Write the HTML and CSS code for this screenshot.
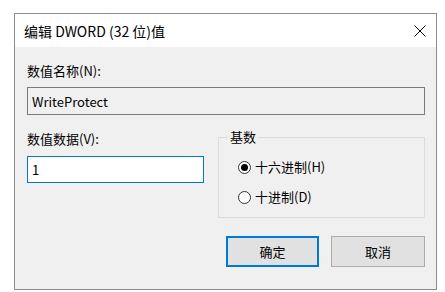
FILE: index.html
```html
<!DOCTYPE html>
<html lang="zh-CN">
<head>
    <meta charset="UTF-8">
    <meta name="viewport" content="width=device-width, initial-scale=1.0">
    <title>编辑 DWORD (32 位)值</title>
    <link rel="stylesheet" href="styles.css">
</head>
<body>

<div class="dialog">
    <div class="titlebar">
        <span class="title">编辑 DWORD (32 位)值</span>
        <button class="close" type="button" aria-label="关闭">
            <svg width="12" height="12" viewBox="0 0 12 12">
                <path d="M0.5 0.5 L11.5 11.5 M11.5 0.5 L0.5 11.5" stroke="#000" stroke-width="1" fill="none"/>
            </svg>
        </button>
    </div>

    <form class="body">
        <label class="field-label" for="value-name">数值名称(N):</label>
        <input type="text" id="value-name" class="name-input" value="WriteProtect" readonly>

        <div class="row">
            <div class="data-col">
                <label class="field-label" for="value-data">数值数据(V):</label>
                <input type="text" id="value-data" class="data-input" value="1">
            </div>

            <fieldset class="base">
                <legend>基数</legend>
                <label class="radio">
                    <input type="radio" name="base" value="hex" checked>
                    <span>十六进制(H)</span>
                </label>
                <label class="radio">
                    <input type="radio" name="base" value="dec">
                    <span>十进制(D)</span>
                </label>
            </fieldset>
        </div>

        <div class="actions">
            <button type="submit" class="btn btn-primary">确定</button>
            <button type="button" class="btn">取消</button>
        </div>
    </form>
</div>

</body>
</html>
```

FILE: styles.css
```css
:root {
    --face: #f0f0f0;
    --accent: #0078d7;
    --frame: #8c8c8c;
    --font: "Noto Sans CJK SC", "Noto Sans", sans-serif;
}

*, *::before, *::after {
    box-sizing: border-box;
}

body {
    margin: 0;
    padding: 13px 0 0 14px;
    background: #fff;
    font-family: var(--font);
    color: #000;
}

.dialog {
    width: 423px;
    height: 277px;
    border: 1px solid var(--frame);
    background: var(--face);
    display: flex;
    flex-direction: column;
}

/* title bar */
.titlebar {
    height: 33px;
    background: #fff;
    display: flex;
    align-items: center;
    justify-content: space-between;
    padding: 0 10px 0 9px;
}

.title {
    font-size: 14px;
    line-height: 16px;
}

.close {
    width: 12px;
    height: 12px;
    padding: 0;
    border: none;
    background: none;
    display: flex;
}

/* body */
.body {
    padding: 16px 11px 0 12px;
    display: flex;
    flex-direction: column;
    flex: 1;
}

.field-label {
    display: block;
    font-size: 13px;
    line-height: 16px;
}

input[type="text"] {
    font-family: var(--font);
    font-size: 13px;
    color: #000;
    padding: 0 4px;
    outline: none;
}

.name-input {
    margin-top: 8px;
    width: 398px;
    height: 28px;
    border: 1px solid #7a7a7a;
    background: var(--face);
}

.row {
    display: flex;
    margin-top: 16px;
}

.data-col {
    width: 177px;
}

.data-input {
    margin-top: 9px;
    width: 177px;
    height: 27px;
    border: 1px solid var(--accent);
    background: #fff;
}

/* radix group */
.base {
    margin: -2px 0 0 14px;
    width: 207px;
    padding: 14px 0 12px 19px;
    border: 1px solid #dcdcdc;
    display: flex;
    flex-direction: column;
    gap: 14px;
}

.base legend {
    padding: 0 2px;
    margin-left: -10px;
    font-size: 13px;
    line-height: 16px;
}

.radio {
    display: flex;
    align-items: center;
    gap: 4px;
    font-size: 13px;
    line-height: 16px;
}

.radio input {
    appearance: none;
    margin: 0;
    width: 13px;
    height: 13px;
    border: 1px solid #333;
    border-radius: 50%;
    background: #fff;
    display: grid;
    place-items: center;
}

.radio input:checked::after {
    content: "";
    width: 7px;
    height: 7px;
    border-radius: 50%;
    background: #000;
}

/* buttons */
.actions {
    display: flex;
    justify-content: flex-end;
    gap: 12px;
    margin-top: 18px;
}

.btn {
    width: 94px;
    height: 31px;
    border: 1px solid #adadad;
    background: #e1e1e1;
    font-family: var(--font);
    font-size: 13px;
    color: #000;
    padding: 0;
}

.btn-primary {
    width: 93px;
    border: 2px solid var(--accent);
}
```
